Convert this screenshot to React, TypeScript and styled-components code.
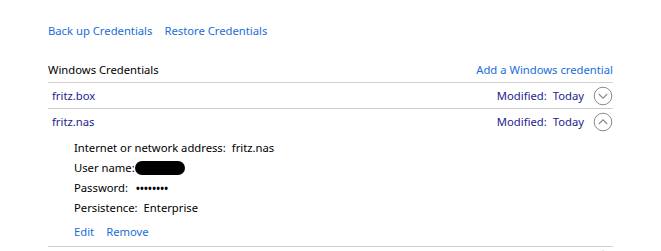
import React from "react";
import styled, { createGlobalStyle } from "styled-components";

const Global = createGlobalStyle`
  html, body { margin: 0; padding: 0; background: #ffffff; }
  body { font-family: "Noto Sans", "Open Sans", sans-serif; font-size: 11.25px; color: #000; }
`;

const Page = styled.div`
  width: 661px;
  height: 251px;
  overflow: hidden;
  box-sizing: border-box;
  padding: 21px 48px 0 48px;
`;

const TopLinks = styled.div`
  display: flex;
  gap: 12px;
  height: 20px;
  align-items: center;
`;

const Link = styled.a`
  color: #1a6dd8;
  text-decoration: none;
  cursor: pointer;
  line-height: 20px;
  white-space: nowrap;
`;

const SectionHeader = styled.div`
  margin-top: 19px;
  height: 22px;
  display: flex;
  align-items: flex-start;
  justify-content: space-between;
  border-bottom: 1px solid #cfcfcf;
`;

const SectionTitle = styled.div`
  line-height: 20px;
  color: #000;
`;

const Row = styled.div`
  border-bottom: 1px solid #cfcfcf;
`;

const RowHead = styled.div`
  height: 25px;
  display: flex;
  align-items: center;
  justify-content: space-between;
  padding-left: 4px;
  color: #23238f;
`;

const RowRight = styled.div`
  display: flex;
  align-items: center;
  gap: 9px;
`;

const Modified = styled.div`
  display: flex;
  gap: 6px;
`;

const Details = styled.div`
  padding: 4px 0 4px 26px;
`;

const DetailLine = styled.div`
  height: 20px;
  line-height: 20px;
  display: flex;
  align-items: center;
  white-space: nowrap;
`;

const Value = styled.span`
  margin-left: 6px;
`;

const Redacted = styled.span`
  display: inline-block;
  width: 50px;
  height: 14px;
  border-radius: 7px;
  background: #000;
`;

const Dots = styled.span`
  margin-left: 8px;
  font-size: 10px;
  font-weight: 700;
  letter-spacing: 0.3px;
`;

const Actions = styled.div`
  margin-top: 4px;
  height: 20px;
  display: flex;
  gap: 12px;
  align-items: center;
`;

const ChevronButton = styled.svg`
  width: 20px;
  height: 20px;
  display: block;
`;

const Chevron = ({ up }: { up?: boolean }) => (
  <ChevronButton viewBox="0 0 20 20">
    <circle cx="10" cy="10" r="8.8" fill="none" stroke="#8a8a8a" strokeWidth="1" />
    {up ? (
      <polyline points="5.8,12 10,7.8 14.2,12" fill="none" stroke="#8a8a8a" strokeWidth="1.1" />
    ) : (
      <polyline points="5.8,8 10,12.2 14.2,8" fill="none" stroke="#8a8a8a" strokeWidth="1.1" />
    )}
  </ChevronButton>
);

export default function App() {
  return (
    <>
      <Global />
      <Page>
        <TopLinks>
          <Link>Back up Credentials</Link>
          <Link>Restore Credentials</Link>
        </TopLinks>
        <SectionHeader>
          <SectionTitle>Windows Credentials</SectionTitle>
          <Link>Add a Windows credential</Link>
        </SectionHeader>
        <Row>
          <RowHead>
            <span>fritz.box</span>
            <RowRight>
              <Modified>
                <span>Modified:</span>
                <span>Today</span>
              </Modified>
              <Chevron />
            </RowRight>
          </RowHead>
        </Row>
        <Row>
          <RowHead>
            <span>fritz.nas</span>
            <RowRight>
              <Modified>
                <span>Modified:</span>
                <span>Today</span>
              </Modified>
              <Chevron up />
            </RowRight>
          </RowHead>
          <Details>
            <DetailLine>
              Internet or network address:<Value>fritz.nas</Value>
            </DetailLine>
            <DetailLine>
              User name:<Redacted />
            </DetailLine>
            <DetailLine>
              Password:<Dots>••••••••</Dots>
            </DetailLine>
            <DetailLine>
              Persistence:<Value>Enterprise</Value>
            </DetailLine>
            <Actions>
              <Link>Edit</Link>
              <Link>Remove</Link>
            </Actions>
          </Details>
        </Row>
        <Row>
          <RowHead>
            <span></span>
            <RowRight>
              <Chevron />
            </RowRight>
          </RowHead>
        </Row>
      </Page>
    </>
  );
}
